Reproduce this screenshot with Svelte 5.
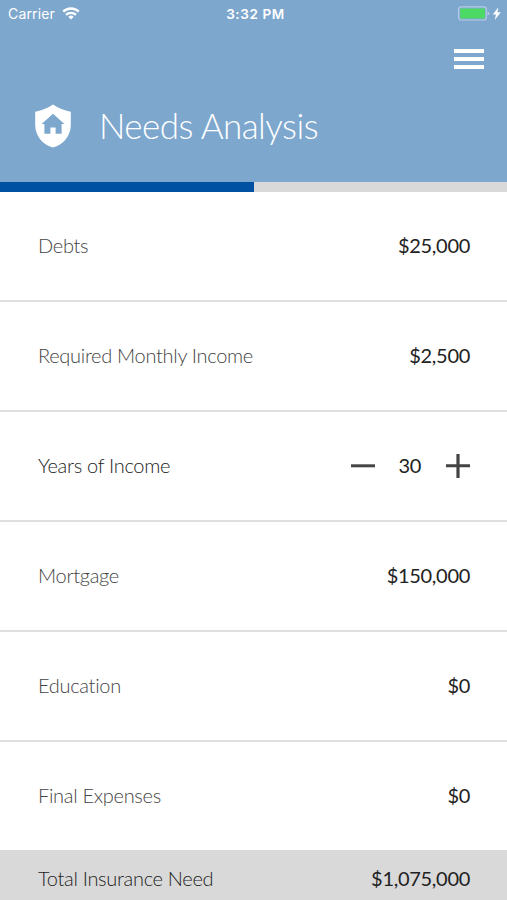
<script>
	let years = 30;
	let progress = 50.1;

	const rows = [
		{ label: 'Debts', value: 25000 },
		{ label: 'Required Monthly Income', value: 2500 },
		{ label: 'Years of Income', stepper: true },
		{ label: 'Mortgage', value: 150000 },
		{ label: 'Education', value: 0 },
		{ label: 'Final Expenses', value: 0 }
	];

	$: total = 175000 + 2500 * 12 * years;

	function money(n) {
		return '$' + n.toLocaleString('en-US');
	}
</script>

<div class="screen">
	<header>
		<div class="status">
			<div class="carrier">
				<span>Carrier</span>
				<svg width="18" height="13" viewBox="0 0 18 13" fill="none" stroke="#fff" stroke-width="2.4">
					<path d="M1.2 4.7a11.2 11.2 0 0 1 15.6 0" />
					<path d="M4 7.9a7.2 7.2 0 0 1 10 0" />
					<path d="M9 12.6 6.3 9.9a3.9 3.9 0 0 1 5.4 0z" fill="#fff" stroke="none" />
				</svg>
			</div>
			<span class="time">3:32 PM</span>
			<div class="battery">
				<svg width="44" height="16" viewBox="0 0 44 16">
					<rect x="0.7" y="0.8" width="27.6" height="13.2" rx="2.5" fill="none" stroke="#b5cee5" stroke-width="1.2" />
					<rect x="2.2" y="2.4" width="24.8" height="10" rx="1" fill="#4cd964" />
					<path d="M29.6 5.5v4q1.8-.6 1.8-2t-1.8-2z" fill="#b5cee5" />
					<path d="M40.4 1.3 34.8 8.5h3.2l-1.2 5.4 6-7.6h-3.4z" fill="#fff" />
				</svg>
			</div>
		</div>
		<div class="nav">
			<button class="menu" aria-label="Menu">
				<i></i>
				<i></i>
				<i></i>
			</button>
		</div>
		<div class="title">
			<svg width="36" height="44" viewBox="0 0 36 44">
				<path d="M18 .4Q25 5.3 35.8 7.8V21C35.8 32 28 41 18 43.6 8 41 .2 32 .2 21V7.8Q11 5.3 18 .4z" fill="#fff" />
				<path d="M18 9.8 29.4 20.1H26.6V29.8H20.6V23.6H15.4V29.8H9.4V20.1H6.6z" fill="#7ea7ce" />
			</svg>
			<h1>Needs Analysis</h1>
		</div>
	</header>
	<div class="progress">
		<div class="bar" style="width: {progress}%"></div>
	</div>

	<ul>
		{#each rows as row}
			<li class:active={row.stepper}>
				<span class="label">{row.label}</span>
				{#if row.stepper}
					<div class="stepper">
						<button aria-label="Less" on:click={() => (years -= 1)}>
							<svg width="24" height="24" viewBox="0 0 24 24"><path d="M0 10.3h24v3H0z" fill="#444" /></svg>
						</button>
						<span class="value">{years}</span>
						<button aria-label="More" on:click={() => (years += 1)}>
							<svg width="24" height="24" viewBox="0 0 24 24"><path d="M0 10.3h10.4V0h3.2v10.3H24v3H13.6V24h-3.2V13.3H0z" fill="#444" /></svg>
						</button>
					</div>
				{:else}
					<span class="value">{money(row.value)}</span>
				{/if}
			</li>
		{/each}
	</ul>

	<footer>
		<span class="label">Total Insurance Need</span>
		<span class="value">{money(total)}</span>
	</footer>
</div>

<style>
	:global(body) {
		background: #fff;
	}
	.screen {
		display: flex;
		flex-direction: column;
		height: 900px;
		overflow: hidden;
		font-family: Lato, sans-serif;
		color: #222;
	}
	header {
		flex: none;
		height: 182px;
		box-sizing: border-box;
		background: #7ea7ce;
		color: #fff;
	}
	.status {
		display: grid;
		grid-template-columns: 1fr auto 1fr;
		align-items: center;
		height: 27px;
		padding: 0 5px 0 8px;
		font-family: Inter, sans-serif;
		font-size: 14px;
	}
	.carrier {
		display: flex;
		align-items: center;
		gap: 7px;
		letter-spacing: 0.15px;
	}
	.time {
		padding-left: 1px;
		font-weight: 600;
		font-size: 13.5px;
		letter-spacing: 0.6px;
	}
	.battery {
		display: flex;
		justify-content: flex-end;
	}
	.nav {
		display: flex;
		justify-content: flex-end;
		padding: 22px 23px 0 0;
	}
	button {
		display: block;
		padding: 0;
		border: 0;
		background: none;
	}
	.menu {
		display: flex;
		flex-direction: column;
		gap: 4px;
		width: 30px;
	}
	.menu i {
		width: 100%;
		height: 4px;
		background: #fff;
	}
	.title {
		display: flex;
		align-items: center;
		gap: 28px;
		padding: 35px 0 0 35px;
	}
	h1 {
		margin: 0;
		font-size: 35px;
		font-weight: 300;
		line-height: 42px;
		padding-bottom: 2px;
		letter-spacing: -0.53px;
	}
	svg {
		display: block;
	}
	.progress {
		flex: none;
		height: 10px;
		background: #d9d9d9;
	}
	.bar {
		height: 100%;
		background: #0051a2;
	}
	ul {
		flex: none;
		margin: 0;
		padding: 0;
		list-style: none;
	}
	li {
		display: flex;
		align-items: center;
		justify-content: space-between;
		height: 110px;
		box-sizing: border-box;
		padding: 0 37px 0 38px;
		border-bottom: 2px solid #dfdfdf;
	}
	li:last-child {
		height: 108px;
		border-bottom: 0;
	}
	.label,
	.value {
		font-size: 20px;
		line-height: 24px;
		padding-bottom: 2px;
	}
	.label {
		font-weight: 300;
		letter-spacing: -0.3px;
		color: #444;
	}
	.active .label {
		color: #222;
	}
	.value {
		letter-spacing: -0.3px;
	}
	.stepper {
		display: flex;
		align-items: center;
		gap: 24px;
	}
	.stepper .value {
		margin: 0 1px 0 -1px;
	}
	footer {
		flex: none;
		display: flex;
		align-items: center;
		justify-content: space-between;
		height: 57px;
		padding: 0 37px 0 38px;
		background: #d9d9d9;
	}
	footer .label {
		color: #222;
	}
</style>
